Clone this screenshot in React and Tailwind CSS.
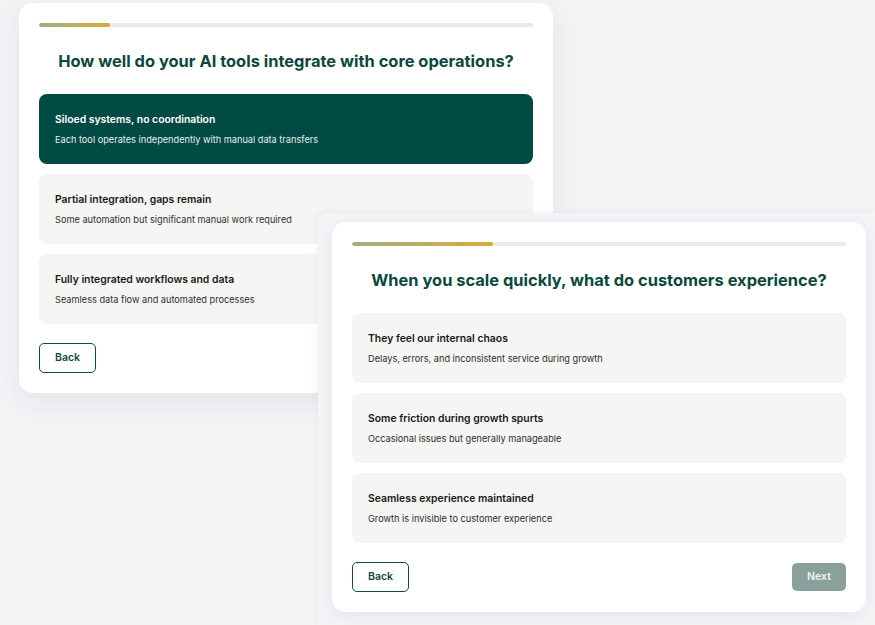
import React from "react";

const font = { fontFamily: "Inter, 'Noto Sans', sans-serif" };

function Option({ title, desc, selected }) {
  return (
    <div
      className={
        "h-[70px] rounded-[8px] px-4 flex flex-col justify-center gap-[8px] " +
        (selected ? "bg-[#024a44]" : "bg-[#f5f5f3]")
      }
    >
      <div className={"text-[10.4px] leading-[13px] font-semibold " + (selected ? "text-white" : "text-[#1a1a1a]")}>
        {title}
      </div>
      <div className={"text-[9.2px] leading-[12px] " + (selected ? "text-[#e6efed]" : "text-[#2e2e2e]")}>
        {desc}
      </div>
    </div>
  );
}

function Card({ progress, question, options, showNext, className }) {
  return (
    <div
      className={
        "w-[534px] h-[390px] rounded-[14px] bg-white px-5 pt-5 " + className
      }
    >
      <div className="h-[4px] rounded-full bg-[#ecebe6] overflow-hidden">
        <div
          className="h-full rounded-full bg-gradient-to-r from-[#9fae82] to-[#d8ab2f]"
          style={{ width: progress }}
        />
      </div>
      <h2 className="mt-[20px] text-center text-[16.45px] leading-[28px] font-bold text-[#0a4840]">
        {question}
      </h2>
      <div className="mt-[19px] flex flex-col gap-[10px]">
        {options.map((o, i) => (
          <Option key={i} {...o} />
        ))}
      </div>
      <div className="mt-[19px] flex justify-between items-center">
        <button className="w-[57px] h-[30px] rounded-[5px] border-[1.5px] border-[#0d4b44] text-[10.5px] font-semibold text-[#0d4b44]">
          Back
        </button>
        {showNext && (
          <button className="w-[54px] h-[28px] rounded-[5px] bg-[#8aa09b] text-[10.5px] font-semibold text-[#f0f4f3]">
            Next
          </button>
        )}
      </div>
    </div>
  );
}

export default function App() {
  return (
    <div className="relative w-[875px] h-[625px] bg-[#f3f4f6] overflow-hidden" style={font}>
      <Card
        className="absolute left-[19px] top-[3px] shadow-[0_8px_30px_rgba(30,40,60,0.08)]"
        progress="14.3%"
        question="How well do your AI tools integrate with core operations?"
        options={[
          { title: "Siloed systems, no coordination", desc: "Each tool operates independently with manual data transfers", selected: true },
          { title: "Partial integration, gaps remain", desc: "Some automation but significant manual work required" },
          { title: "Fully integrated workflows and data", desc: "Seamless data flow and automated processes" },
        ]}
      />
      <div className="absolute left-[318px] top-[213px] right-0 bottom-0 rounded-tl-[10px] bg-[#f4f5f7] pl-[14px] pt-[9px] shadow-[-2px_-2px_8px_rgba(30,40,60,0.04)]">
        <Card
          className="shadow-[0_4px_20px_rgba(30,40,60,0.08)]"
          progress="28.6%"
          question="When you scale quickly, what do customers experience?"
          showNext
          options={[
            { title: "They feel our internal chaos", desc: "Delays, errors, and inconsistent service during growth" },
            { title: "Some friction during growth spurts", desc: "Occasional issues but generally manageable" },
            { title: "Seamless experience maintained", desc: "Growth is invisible to customer experience" },
          ]}
        />
      </div>
    </div>
  );
}
